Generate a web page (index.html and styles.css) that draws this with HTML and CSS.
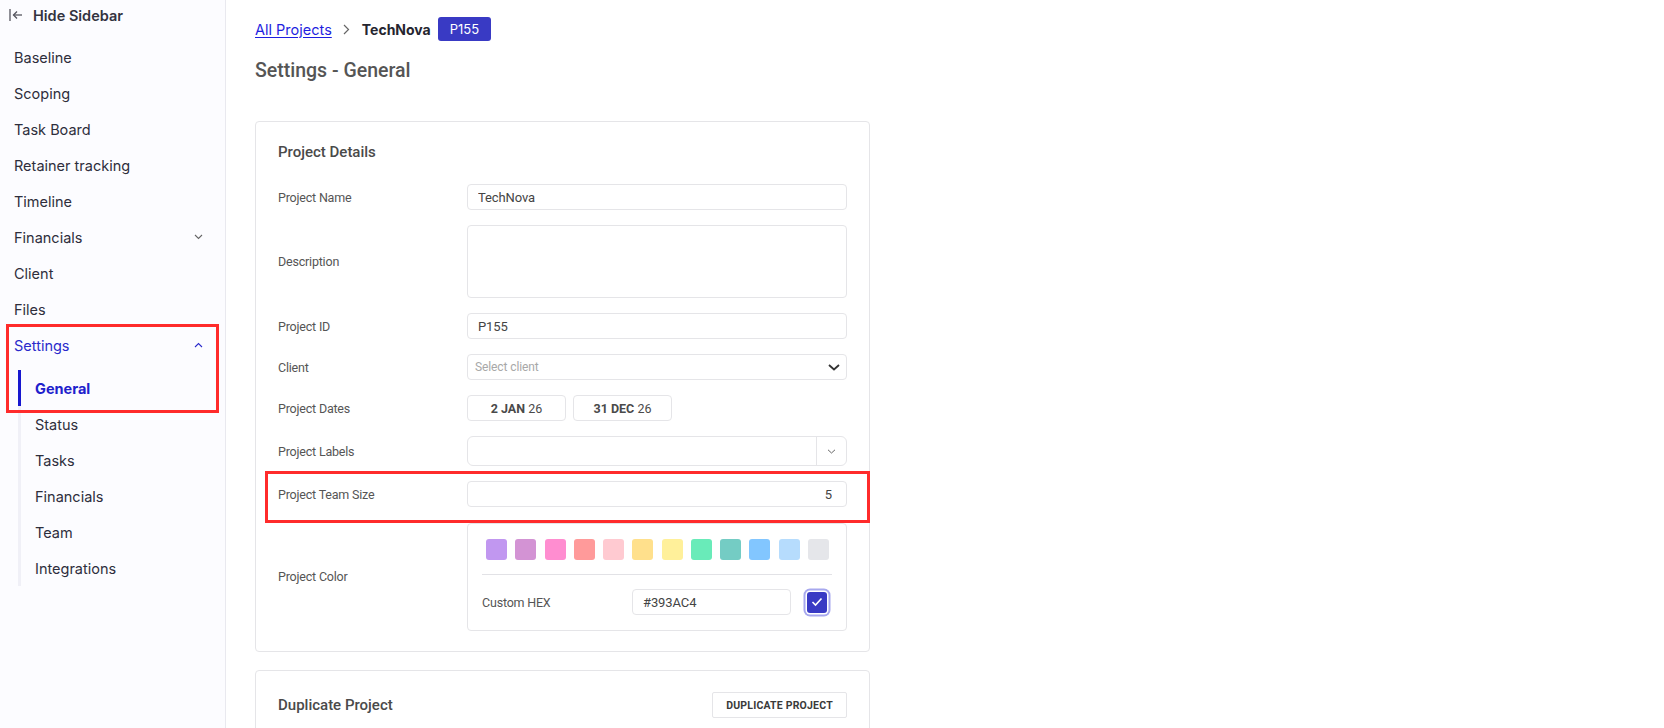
FILE: index.html
```html
<!DOCTYPE html>
<html lang="en">
<head>
  <meta charset="UTF-8">
  <meta name="viewport" content="width=device-width, initial-scale=1.0">
  <title>TechNova - Settings</title>
  <link rel="stylesheet" href="styles.css">
</head>
<body>
  <div class="app">
    <aside class="sidebar">
      <button class="hide-btn">
        <svg class="hide-ico" width="14" height="14" viewBox="0 0 14 14" fill="none" stroke="#55555f" stroke-width="1.3">
          <line x1="1" y1="1" x2="1" y2="13"/>
          <line x1="4.5" y1="7" x2="13" y2="7"/>
          <polyline points="8,3.5 4.5,7 8,10.5"/>
        </svg>
        Hide Sidebar
      </button>

      <nav class="nav">
        <a class="nav-item">Baseline</a>
        <a class="nav-item">Scoping</a>
        <a class="nav-item">Task Board</a>
        <a class="nav-item">Retainer tracking</a>
        <a class="nav-item">Timeline</a>
        <a class="nav-item">Financials
          <svg class="chev" width="9" height="6" viewBox="0 0 9 6" fill="none" stroke="currentColor" stroke-width="1.1"><polyline points="1,1 4.5,4.5 8,1"/></svg>
        </a>
        <a class="nav-item">Client</a>
        <a class="nav-item">Files</a>

        <div class="nav-group">
          <a class="nav-item open">Settings
            <svg class="chev" width="9" height="6" viewBox="0 0 9 6" fill="none" stroke="currentColor" stroke-width="1.1"><polyline points="1,5 4.5,1.5 8,5"/></svg>
          </a>
          <div class="sub">
            <a class="sub-item active">General</a>
            <a class="sub-item">Status</a>
            <a class="sub-item">Tasks</a>
            <a class="sub-item">Financials</a>
            <a class="sub-item">Team</a>
            <a class="sub-item">Integrations</a>
          </div>
          <span class="mark mark-nav"></span>
        </div>
      </nav>
    </aside>

    <main class="main">
      <div class="crumbs">
        <a class="crumb-link" href="#">All Projects</a>
        <svg class="crumb-sep" width="7" height="11" viewBox="0 0 7 11" fill="none" stroke="#666" stroke-width="1.2"><polyline points="1,1 5.5,5.5 1,10"/></svg>
        <span class="crumb-name">TechNova</span>
        <span class="badge">P155</span>
      </div>

      <h1 class="page-title">Settings - General</h1>

      <section class="card">
        <h2 class="card-title">Project Details</h2>

        <div class="form">
          <div class="row">
            <label class="lbl">Project Name</label>
            <input class="field" type="text" value="TechNova">
          </div>
          <div class="row">
            <label class="lbl">Description</label>
            <textarea class="field area"></textarea>
          </div>
          <div class="row">
            <label class="lbl">Project ID</label>
            <input class="field" type="text" value="P155">
          </div>
          <div class="row">
            <label class="lbl">Client</label>
            <div class="field select">
              <span class="placeholder">Select client</span>
              <svg width="12" height="7" viewBox="0 0 12 7" fill="none" stroke="#333" stroke-width="1.8"><polyline points="1,1 6,5.5 11,1"/></svg>
            </div>
          </div>
          <div class="row">
            <label class="lbl">Project Dates</label>
            <div class="dates">
              <button class="date-btn"><b>2 JAN</b> 26</button>
              <button class="date-btn"><b>31 DEC</b> 26</button>
            </div>
          </div>
          <div class="row">
            <label class="lbl">Project Labels</label>
            <div class="field multi">
              <span class="multi-input"></span>
              <span class="multi-toggle">
                <svg width="9" height="5" viewBox="0 0 9 5" fill="none" stroke="#666" stroke-width="1"><polyline points="1,0.8 4.5,4 8,0.8"/></svg>
              </span>
            </div>
          </div>
          <div class="row">
            <label class="lbl">Project Team Size</label>
            <input class="field num" type="text" value="5">
            <span class="mark mark-row"></span>
          </div>
          <div class="row">
            <label class="lbl">Project Color</label>
            <div class="color-box">
              <div class="swatches">
                <span class="swatch sw-1"></span>
                <span class="swatch sw-2"></span>
                <span class="swatch sw-3"></span>
                <span class="swatch sw-4"></span>
                <span class="swatch sw-5"></span>
                <span class="swatch sw-6"></span>
                <span class="swatch sw-7"></span>
                <span class="swatch sw-8"></span>
                <span class="swatch sw-9"></span>
                <span class="swatch sw-10"></span>
                <span class="swatch sw-11"></span>
                <span class="swatch sw-12"></span>
              </div>
              <div class="hex-row">
                <span class="hex-lbl">Custom HEX</span>
                <input class="field hex" type="text" value="#393AC4">
                <span class="check">
                  <svg width="12" height="10" viewBox="0 0 12 10" fill="none" stroke="#fff" stroke-width="1.6"><polyline points="1.5,5 4.5,8 10.5,1.5"/></svg>
                </span>
              </div>
            </div>
          </div>
        </div>
      </section>

      <section class="card card-dup">
        <h2 class="card-title">Duplicate Project</h2>
        <button class="dup-btn">DUPLICATE PROJECT</button>
      </section>
    </main>
  </div>
</body>
</html>
```

FILE: styles.css
```css
:root {
  --brand: #393ac4;
  --line: #e5e5e8;
  --mark: #ff2b2b;
  --txt: #2e2e3c;
  --muted: #555;
}

* { box-sizing: border-box; }

body {
  margin: 0;
  font-family: Inter, 'Noto Sans', sans-serif;
  color: var(--txt);
  background: #fff;
}

.app {
  display: flex;
  min-height: 100vh;
}

/* sidebar */
.sidebar {
  width: 226px;
  flex-shrink: 0;
  background: #fcfcff;
  border-right: 1px solid #e9e9ef;
}

.hide-btn {
  display: flex;
  align-items: center;
  gap: 10px;
  height: 30px;
  padding: 0 0 0 9px;
  border: none;
  background: none;
  font-family: Inter, sans-serif;
  font-size: 14.5px;
  font-weight: 600;
  color: #33333f;
  cursor: pointer;
}

.nav {
  display: flex;
  flex-direction: column;
  margin-top: 9px;
}

.nav-item {
  display: flex;
  align-items: center;
  justify-content: space-between;
  height: 36px;
  padding: 0 22px 0 14px;
  font-size: 14.5px;
  color: var(--txt);
  cursor: pointer;
}

.nav-item .chev { color: #666; }
.nav-item.open { color: #2a2acb; }
.nav-item.open .chev { color: #2a2acb; }

.nav-group { position: relative; }

.sub {
  display: flex;
  flex-direction: column;
  margin: 7px 0 0 18px;
  border-left: 3px solid #f0f0f7;
}

.sub-item {
  display: flex;
  align-items: center;
  height: 36px;
  padding-left: 14px;
  font-size: 14.5px;
  color: var(--txt);
  cursor: pointer;
}

.sub-item.active {
  margin-left: -3px;
  border-left: 3px solid #1717cf;
  padding-left: 14px;
  font-weight: 700;
  color: #2020cc;
}

/* red highlight frames */
.mark {
  position: absolute;
  border: 3px solid var(--mark);
  pointer-events: none;
}

.mark-nav {
  top: -3px;
  left: 6px;
  width: 213px;
  height: 89px;
}

.mark-row {
  top: -10px;
  bottom: -16px;
  left: -13px;
  right: -23px;
}

/* main */
.main {
  flex: 1;
  padding: 17px 29px;
}

.crumbs {
  display: flex;
  align-items: center;
  height: 24px;
  font-size: 14.5px;
}

.crumb-link {
  color: #1f1fe0;
  text-decoration: underline;
  text-underline-offset: 2px;
}

.crumb-sep { margin: 0 12px 0 11px; }

.crumb-name {
  font-size: 14px;
  font-weight: 700;
  color: #25252f;
}

.badge {
  display: inline-flex;
  align-items: center;
  height: 24px;
  margin-left: 7px;
  padding: 0 12px;
  border-radius: 3px;
  background: var(--brand);
  color: #fff;
  font-size: 13px;
}

.page-title {
  margin: 18px 0 38px;
  font-family: Roboto, 'Liberation Sans', sans-serif;
  font-size: 19.5px;
  line-height: 24px;
  font-weight: 500;
  color: var(--muted);
}

.card {
  width: 615px;
  padding: 21px 22px 20px;
  border: 1px solid var(--line);
  border-radius: 4px;
  font-family: Roboto, 'Liberation Sans', sans-serif;
}

.card-title {
  margin: 0 0 23px;
  font-size: 15px;
  line-height: 18px;
  font-weight: 500;
  color: #4a4a4a;
}

.form {
  display: flex;
  flex-direction: column;
  gap: 15px;
}

.row {
  position: relative;
  display: flex;
  align-items: center;
}

.lbl {
  width: 189px;
  flex-shrink: 0;
  font-size: 12.5px;
  letter-spacing: -0.2px;
  color: var(--muted);
}

.field {
  width: 380px;
  height: 26px;
  padding: 0 10px;
  border: 1px solid var(--line);
  border-radius: 4px;
  background: #fff;
  font-family: Roboto, 'Liberation Sans', sans-serif;
  font-size: 13px;
  letter-spacing: -0.1px;
  color: #444;
  outline: none;
}

.area {
  height: 73px;
  resize: none;
}

.num {
  text-align: right;
  padding-right: 14px;
}

.select {
  display: flex;
  align-items: center;
  justify-content: space-between;
  padding: 0 6px 0 7px;
}

.placeholder {
  font-size: 12px;
  color: #a8a8a8;
}

.dates {
  display: flex;
  gap: 7px;
}

.date-btn {
  width: 99px;
  height: 26px;
  border: 1px solid var(--line);
  border-radius: 4px;
  background: #fff;
  font-family: Roboto, 'Liberation Sans', sans-serif;
  font-size: 12.5px;
  color: #4a4a4a;
}

.date-btn b { font-weight: 700; }

.multi {
  display: flex;
  height: 30px;
  padding: 0;
  border-radius: 6px;
}

.multi-input { flex: 1; }

.multi-toggle {
  display: flex;
  align-items: center;
  justify-content: center;
  width: 30px;
  border-left: 1px solid var(--line);
}

/* colour picker */
.color-box {
  width: 380px;
  margin-top: 1px;
  padding: 15px 14px 15px;
  border: 1px solid var(--line);
  border-radius: 4px;
}

.swatches {
  display: flex;
  justify-content: space-between;
  padding: 0 3px 0 4px;
}

.swatch {
  width: 21px;
  height: 21px;
  border-radius: 3px;
}

.sw-1 { background: #c197f0; }
.sw-2 { background: #d393d4; }
.sw-3 { background: #ff8dd0; }
.sw-4 { background: #ff9a9a; }
.sw-5 { background: #ffcad1; }
.sw-6 { background: #ffe08c; }
.sw-7 { background: #fff09a; }
.sw-8 { background: #69ebb9; }
.sw-9 { background: #74ccc4; }
.sw-10 { background: #82c6ff; }
.sw-11 { background: #b6dcfd; }
.sw-12 { background: #e5e6ea; }

.hex-row {
  display: flex;
  align-items: center;
  margin-top: 14px;
  padding-top: 14px;
  border-top: 1px solid #e2e2e6;
}

.hex-lbl {
  width: 150px;
  font-size: 12.5px;
  letter-spacing: -0.2px;
  color: var(--muted);
}

.hex {
  width: 159px;
}

.check {
  display: flex;
  align-items: center;
  justify-content: center;
  width: 20px;
  height: 21px;
  margin: 0 5px 0 auto;
  border-radius: 3px;
  background: var(--brand);
  box-shadow: 0 0 0 1.5px #fff, 0 0 0 3.5px #a7a8ee;
}

/* duplicate card */
.card-dup {
  display: flex;
  align-items: center;
  justify-content: space-between;
  margin-top: 18px;
  padding-bottom: 21px;
}

.card-dup .card-title { margin: 0; }

.dup-btn {
  height: 26px;
  width: 135px;
  border: 1px solid var(--line);
  border-radius: 2px;
  background: #fff;
  font-family: Roboto, 'Liberation Sans', sans-serif;
  font-size: 10.5px;
  font-weight: 700;
  letter-spacing: 0.2px;
  color: #3a3a3a;
}
```
